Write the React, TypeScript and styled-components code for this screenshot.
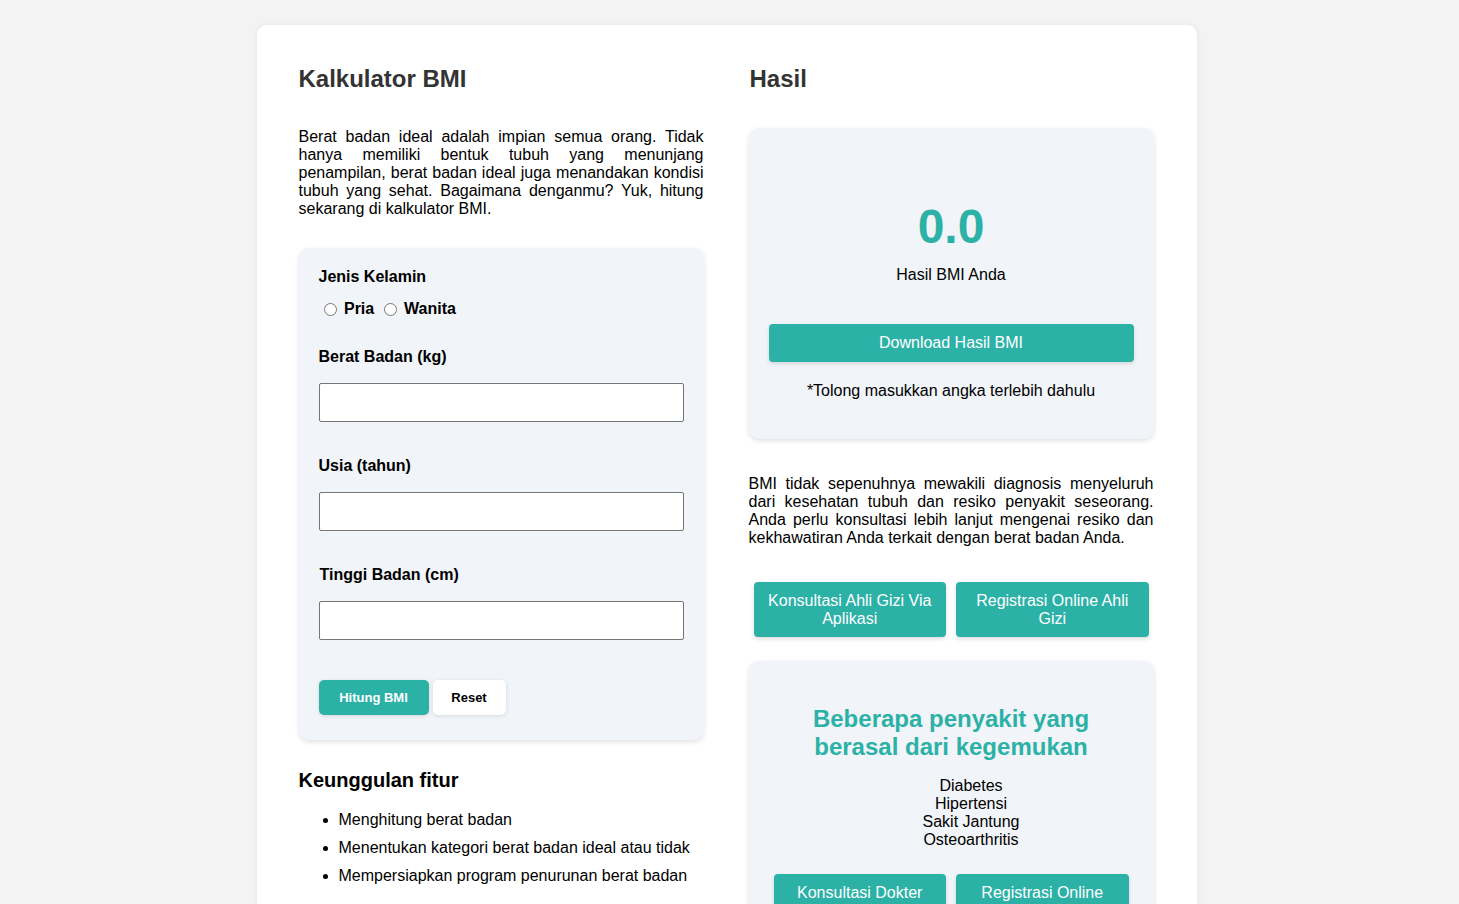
import React from "react";
import styled, { createGlobalStyle } from "styled-components";

const teal = "#2cb1a7";
const panelBg = "#f1f4f8";

const Global = createGlobalStyle`
  html, body { margin: 0; padding: 0; background: #f3f3f3; }
  body { font-family: "Liberation Sans", Arial, sans-serif; color: #000; }
  * { box-sizing: border-box; }
`;

const Page = styled.div`
  padding-top: 25px;
`;

const Card = styled.div`
  width: 940px;
  margin-left: calc(50% - 473px);
  background: #fff;
  border-radius: 10px;
  box-shadow: 0 0 6px rgba(0, 0, 0, 0.06);
  padding: 40px 43px 60px 42px;
  display: grid;
  grid-template-columns: 405px 405px;
  justify-content: space-between;
`;

const Column = styled.div`
  display: flex;
  flex-direction: column;
`;

const Title = styled.h2<{ $indent?: number }>`
  margin: 0 0 0 ${(p) => p.$indent ?? 0}px;
  font-size: 24px;
  line-height: 28px;
  font-weight: bold;
  color: #333;
`;

const Para = styled.p<{ $top: number }>`
  margin: ${(p) => p.$top}px 0 0;
  font-size: 16px;
  line-height: 18px;
  text-align: justify;
`;

const Panel = styled.div<{ $top: number }>`
  margin-top: ${(p) => p.$top}px;
  background: ${panelBg};
  border-radius: 10px;
  box-shadow: 0 2px 5px rgba(0, 0, 0, 0.12);
`;

const FormPanel = styled(Panel)`
  padding: 20px 20px 25px;
  display: flex;
  flex-direction: column;
`;

const FieldLabel = styled.label<{ $top?: number; $indent?: number }>`
  display: block;
  margin-top: ${(p) => p.$top ?? 0}px;
  margin-left: ${(p) => p.$indent ?? 0}px;
  font-size: 16px;
  line-height: 18px;
  font-weight: bold;
`;

const RadioRow = styled.div`
  margin-top: 14px;
  font-size: 16px;
  line-height: 18px;
  font-weight: bold;
  input {
    margin: 3px 3px 0 5px;
    width: 13px;
    height: 13px;
    vertical-align: top;
  }
`;

const TextInput = styled.input`
  margin-top: 17px;
  width: 365px;
  height: 39px;
  border: 1px solid #767676;
  border-radius: 2px;
  background: #fff;
  padding: 0 8px;
  font-size: 16px;
  font-family: inherit;
`;

const ButtonRow = styled.div`
  margin-top: 40px;
  display: flex;
  gap: 4px;
`;

const SmallButton = styled.button<{ $primary?: boolean }>`
  height: 35px;
  width: ${(p) => (p.$primary ? 110 : 73)}px;
  border: none;
  border-radius: 5px;
  font-family: inherit;
  font-size: 13px;
  font-weight: bold;
  background: ${(p) => (p.$primary ? teal : "#fff")};
  color: ${(p) => (p.$primary ? "#fff" : "#000")};
  box-shadow: 0 1px 4px rgba(0, 0, 0, 0.12);
  cursor: pointer;
`;

const SubTitle = styled.h3`
  margin: 29px 0 0;
  font-size: 20px;
  line-height: 23px;
  font-weight: bold;
`;

const FeatureList = styled.ul`
  margin: 19px 0 0;
  padding-left: 40px;
  li {
    font-size: 16px;
    line-height: 18px;
    margin-bottom: 10px;
  }
`;

const ResultPanel = styled(Panel)`
  padding: 20px 20px 39px;
  display: flex;
  flex-direction: column;
  align-items: center;
  text-align: center;
`;

const BmiValue = styled.div`
  margin-top: 51px;
  font-size: 48px;
  line-height: 55px;
  font-weight: bold;
  color: ${teal};
`;

const CenterText = styled.div<{ $top: number }>`
  margin-top: ${(p) => p.$top}px;
  font-size: 16px;
  line-height: 18px;
`;

const WideButton = styled.button`
  margin-top: 40px;
  width: 365px;
  height: 38px;
  border: none;
  border-radius: 4px;
  background: ${teal};
  color: #fff;
  font-family: inherit;
  font-size: 16px;
  box-shadow: 0 2px 4px rgba(0, 0, 0, 0.12);
`;

const PairRow = styled.div<{ $top: number }>`
  margin-top: ${(p) => p.$top}px;
  display: flex;
  gap: 10px;
  padding: 0 5px;
`;

const TealButton = styled.button<{ $tall?: boolean }>`
  flex: 1;
  height: ${(p) => (p.$tall ? 55 : 38)}px;
  padding: 0 12px;
  border: none;
  border-radius: 4px;
  background: ${teal};
  color: #fff;
  font-family: inherit;
  font-size: 16px;
  line-height: 18px;
  box-shadow: 0 2px 4px rgba(0, 0, 0, 0.14);
`;

const DiseasePanel = styled(Panel)`
  padding: 44px 20px 40px;
  text-align: center;
`;

const DiseaseTitle = styled.h3`
  margin: 0 auto;
  width: 290px;
  font-size: 24px;
  line-height: 28px;
  font-weight: bold;
  color: ${teal};
`;

const DiseaseList = styled.ul`
  list-style: none;
  margin: 16px 0 0;
  padding-left: 40px;
  font-size: 16px;
  line-height: 18px;
`;

export default function App() {
  return (
    <>
      <Global />
      <Page>
        <Card>
          <Column>
            <Title>Kalkulator BMI</Title>
            <Para $top={35}>
              Berat badan ideal adalah impian semua orang. Tidak hanya memiliki bentuk tubuh yang
              menunjang penampilan, berat badan ideal juga menandakan kondisi tubuh yang sehat.
              Bagaimana denganmu? Yuk, hitung sekarang di kalkulator BMI.
            </Para>
            <FormPanel $top={30}>
              <FieldLabel>Jenis Kelamin</FieldLabel>
              <RadioRow>
                <input type="radio" name="gender" id="pria" /> <label htmlFor="pria">Pria</label>{" "}
                <input type="radio" name="gender" id="wanita" />{" "}
                <label htmlFor="wanita">Wanita</label>
              </RadioRow>
              <FieldLabel $top={30}>Berat Badan (kg)</FieldLabel>
              <TextInput type="text" />
              <FieldLabel $top={35}>Usia (tahun)</FieldLabel>
              <TextInput type="text" />
              <FieldLabel $top={35} $indent={1}>
                Tinggi Badan (cm)
              </FieldLabel>
              <TextInput type="text" />
              <ButtonRow>
                <SmallButton $primary>Hitung BMI</SmallButton>
                <SmallButton>Reset</SmallButton>
              </ButtonRow>
            </FormPanel>
            <SubTitle>Keunggulan fitur</SubTitle>
            <FeatureList>
              <li>Menghitung berat badan</li>
              <li>Menentukan kategori berat badan ideal atau tidak</li>
              <li>Mempersiapkan program penurunan berat badan</li>
            </FeatureList>
          </Column>
          <Column>
            <Title $indent={1}>Hasil</Title>
            <ResultPanel $top={35}>
              <BmiValue>0.0</BmiValue>
              <CenterText $top={12}>Hasil BMI Anda</CenterText>
              <WideButton>Download Hasil BMI</WideButton>
              <CenterText $top={20}>*Tolong masukkan angka terlebih dahulu</CenterText>
            </ResultPanel>
            <Para $top={36}>
              BMI tidak sepenuhnya mewakili diagnosis menyeluruh dari kesehatan tubuh dan resiko
              penyakit seseorang. Anda perlu konsultasi lebih lanjut mengenai resiko dan
              kekhawatiran Anda terkait dengan berat badan Anda.
            </Para>
            <PairRow $top={35}>
              <TealButton $tall>Konsultasi Ahli Gizi Via Aplikasi</TealButton>
              <TealButton $tall>Registrasi Online Ahli Gizi</TealButton>
            </PairRow>
            <DiseasePanel $top={24}>
              <DiseaseTitle>Beberapa penyakit yang berasal dari kegemukan</DiseaseTitle>
              <DiseaseList>
                <li>Diabetes</li>
                <li>Hipertensi</li>
                <li>Sakit Jantung</li>
                <li>Osteoarthritis</li>
              </DiseaseList>
              <PairRow $top={25}>
                <TealButton>Konsultasi Dokter</TealButton>
                <TealButton>Registrasi Online</TealButton>
              </PairRow>
            </DiseasePanel>
          </Column>
        </Card>
      </Page>
    </>
  );
}
